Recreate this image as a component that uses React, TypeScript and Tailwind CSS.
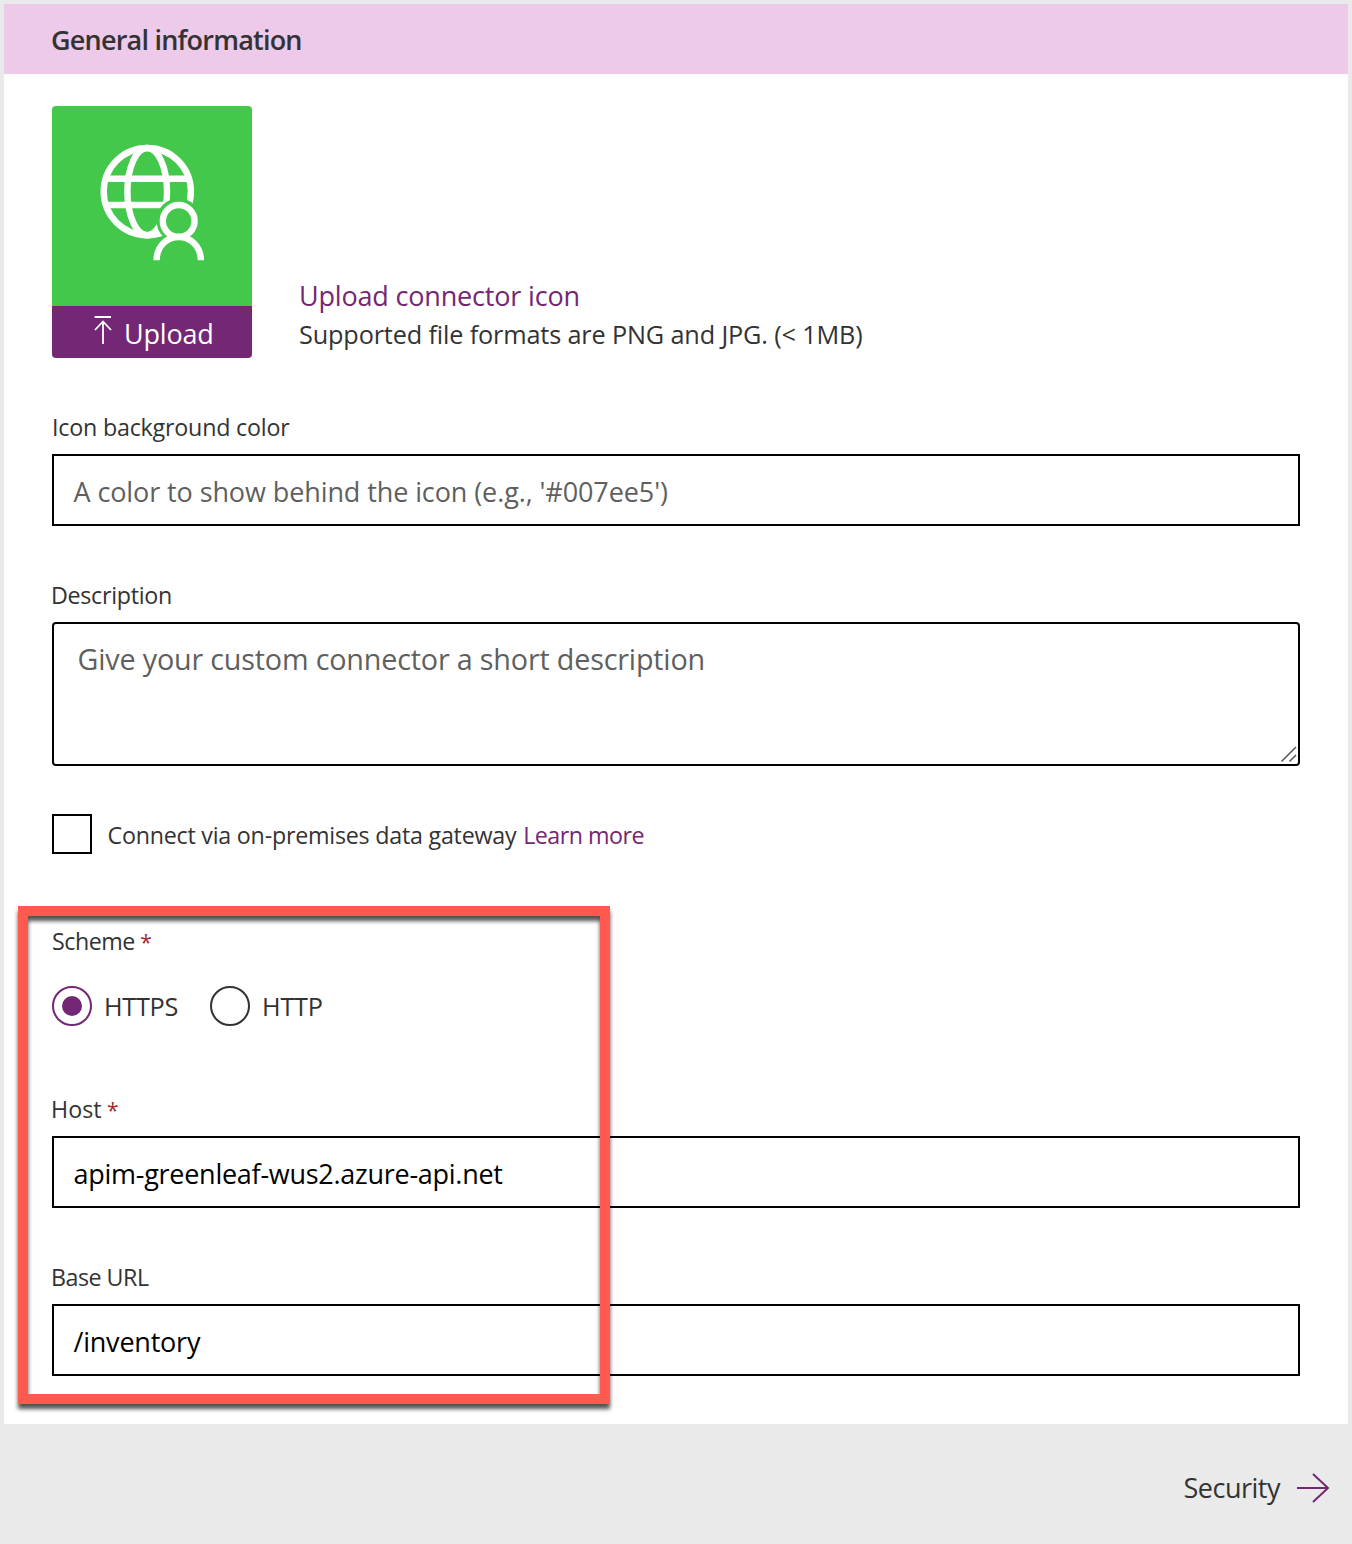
import type { ReactNode } from "react";

function Label({ children }: { children: ReactNode }) {
  return (
    <div className="h-8 text-[23.25px] leading-8 whitespace-pre text-[#333]">
      {children}
    </div>
  );
}

function Required() {
  return <span className="text-[21px] tracking-normal text-[#a4262c]"> *</span>;
}

function Field({ label, children }: { label: ReactNode; children: ReactNode }) {
  return (
    <div className="mt-[53px]">
      <Label>{label}</Label>
      <div className="mt-[11px] flex h-[72px] items-center border-2 border-black pt-[3px] pl-[19.5px] text-[27px] leading-9 whitespace-pre text-black">
        {children}
      </div>
    </div>
  );
}

function ConnectorIcon() {
  return (
    <svg width="200" height="200" viewBox="52 106 200 200" fill="none" stroke="#fff" strokeWidth="6.4">
      <circle cx="147.3" cy="191.6" r="43.6" />
      <ellipse cx="147.2" cy="191.6" rx="19.8" ry="43.6" />
      <path d="M105.5 178.7H189M105.5 205H189" />
      <circle cx="178.7" cy="220.6" r="22.3" fill="#43c84b" stroke="none" />
      <path d="M153 262a25.7 25.7 0 0 1 51.4 0z" fill="#43c84b" stroke="#43c84b" strokeWidth="6" />
      <circle cx="178.7" cy="220.9" r="15.9" />
      <path d="M156.6 260.3C156.8 246 167 237 178.7 237S200.6 246 200.9 260.3" />
    </svg>
  );
}

export default function App() {
  return (
    <div className="h-[1544px] w-[1352px] bg-[#eaeaea] p-1 font-['Open_Sans','Noto_Sans',sans-serif] text-[#333]">
      <section className="relative h-[1420px] bg-white">
        <h2 className="h-[70px] bg-[#edc9ea] pl-[47px] text-[27px] leading-[71px] font-semibold tracking-[-0.78px]">
          General information
        </h2>
        <div className="px-12 pt-8">
          <div className="flex h-[252px]">
            <div className="w-[200px] overflow-hidden rounded-[4px]">
              <div className="h-[200px] bg-[#43c84b]">
                <ConnectorIcon />
              </div>
              <div className="flex h-[52px] bg-[#742774] pl-[41px] text-white">
                <svg className="mt-[9px]" width="20" height="30" viewBox="0 0 20 30" fill="none" stroke="currentColor" strokeWidth="1.8">
                  <path d="M1.5 2H18M10 29V7M2 15l8-8.500l8 8.500" />
                </svg>
                <span className="ml-[11px] text-[27px] leading-[55px] tracking-[-0.2px]">Upload</span>
              </div>
            </div>
            <div className="ml-[47px] pt-[171px] whitespace-nowrap">
              <div className="text-[27px] leading-[37px] tracking-[-0.18px] text-[#742774]">Upload connector icon</div>
              <div className="text-[25.25px] leading-10 tracking-[-0.15px]">
                Supported file formats are PNG and JPG. (&lt; 1MB)
              </div>
            </div>
          </div>

          <Field label={<span className="tracking-[-0.2px]">Icon background color</span>}>
            <span className="tracking-[-0.1px] text-[#5f5f5f]">A color to show behind the icon (e.g., '#007ee5')</span>
          </Field>

          <div className="mt-[53px]">
            <Label><span className="-ml-px tracking-[-0.3px]">Description</span></Label>
            <div className="relative mt-[11px] h-36 rounded-[4px] border-2 border-black pt-[15px] pl-[23.5px] text-[28.75px] leading-10 tracking-[-0.19px] text-[#5f5f5f]">
              Give your custom connector a short description
              <svg className="absolute right-[1px] bottom-px" width="17" height="17" viewBox="0 0 17 17" stroke="#555" strokeWidth="1.5">
                <path d="M1.500 15.500L16 1M9.500 15.500L16 9" />
              </svg>
            </div>
          </div>

          <div className="mt-12 flex h-10 items-center text-[23.25px] leading-8">
            <span className="size-10 border-2 border-black" />
            <span className="mt-0.5 ml-[15.5px] tracking-[-0.23px] whitespace-pre">Connect via on-premises data gateway </span>
            <span className="mt-0.5 ml-px tracking-[-0.5px] text-[#742774]">Learn more</span>
          </div>

          <div className="mt-[71px]">
            <Label><span className="tracking-[-0.48px]">Scheme</span><Required /></Label>
            <div className="mt-[29px] flex h-10 items-center text-[25.25px] leading-10">
              <span className="flex size-10 items-center justify-center rounded-full border-2 border-[#742774]">
                <span className="size-5 rounded-full bg-[#742774]" />
              </span>
              <span className="ml-3 w-[106px] tracking-[-0.3px]">HTTPS</span>
              <span className="size-10 rounded-full border-2 border-[#333]" />
              <span className="ml-3 tracking-[-0.2px]">HTTP</span>
            </div>
          </div>

          <div className="pt-[14px]">
            <Field label={<><span className="-ml-px">Host</span><Required /></>}>
              <span className="tracking-[-0.27px]">apim-greenleaf-wus2.azure-api.net</span>
            </Field>
            <Field label={<span className="-ml-px tracking-[-0.5px]">Base URL</span>}>
              <span className="tracking-[-0.22px]">/inventory</span>
            </Field>
          </div>
        </div>
        <div className="absolute top-[902px] left-[14px] h-[498px] w-[592px] border-10 border-[#ff5a4d] drop-shadow-[0_5px_2.2px_rgba(0,0,0,0.68)]" />
      </section>
      <footer className="flex h-[127px] items-center justify-end pr-[18px]">
        <span className="text-[27px] leading-9 tracking-[-0.5px]">Security</span>
        <svg className="ml-4" width="34" height="32" viewBox="0 0 34 32" fill="none" stroke="#742774" strokeWidth="2">
          <path d="M1 16H32.500M17 2L32 16L17 30" />
        </svg>
      </footer>
    </div>
  );
}
